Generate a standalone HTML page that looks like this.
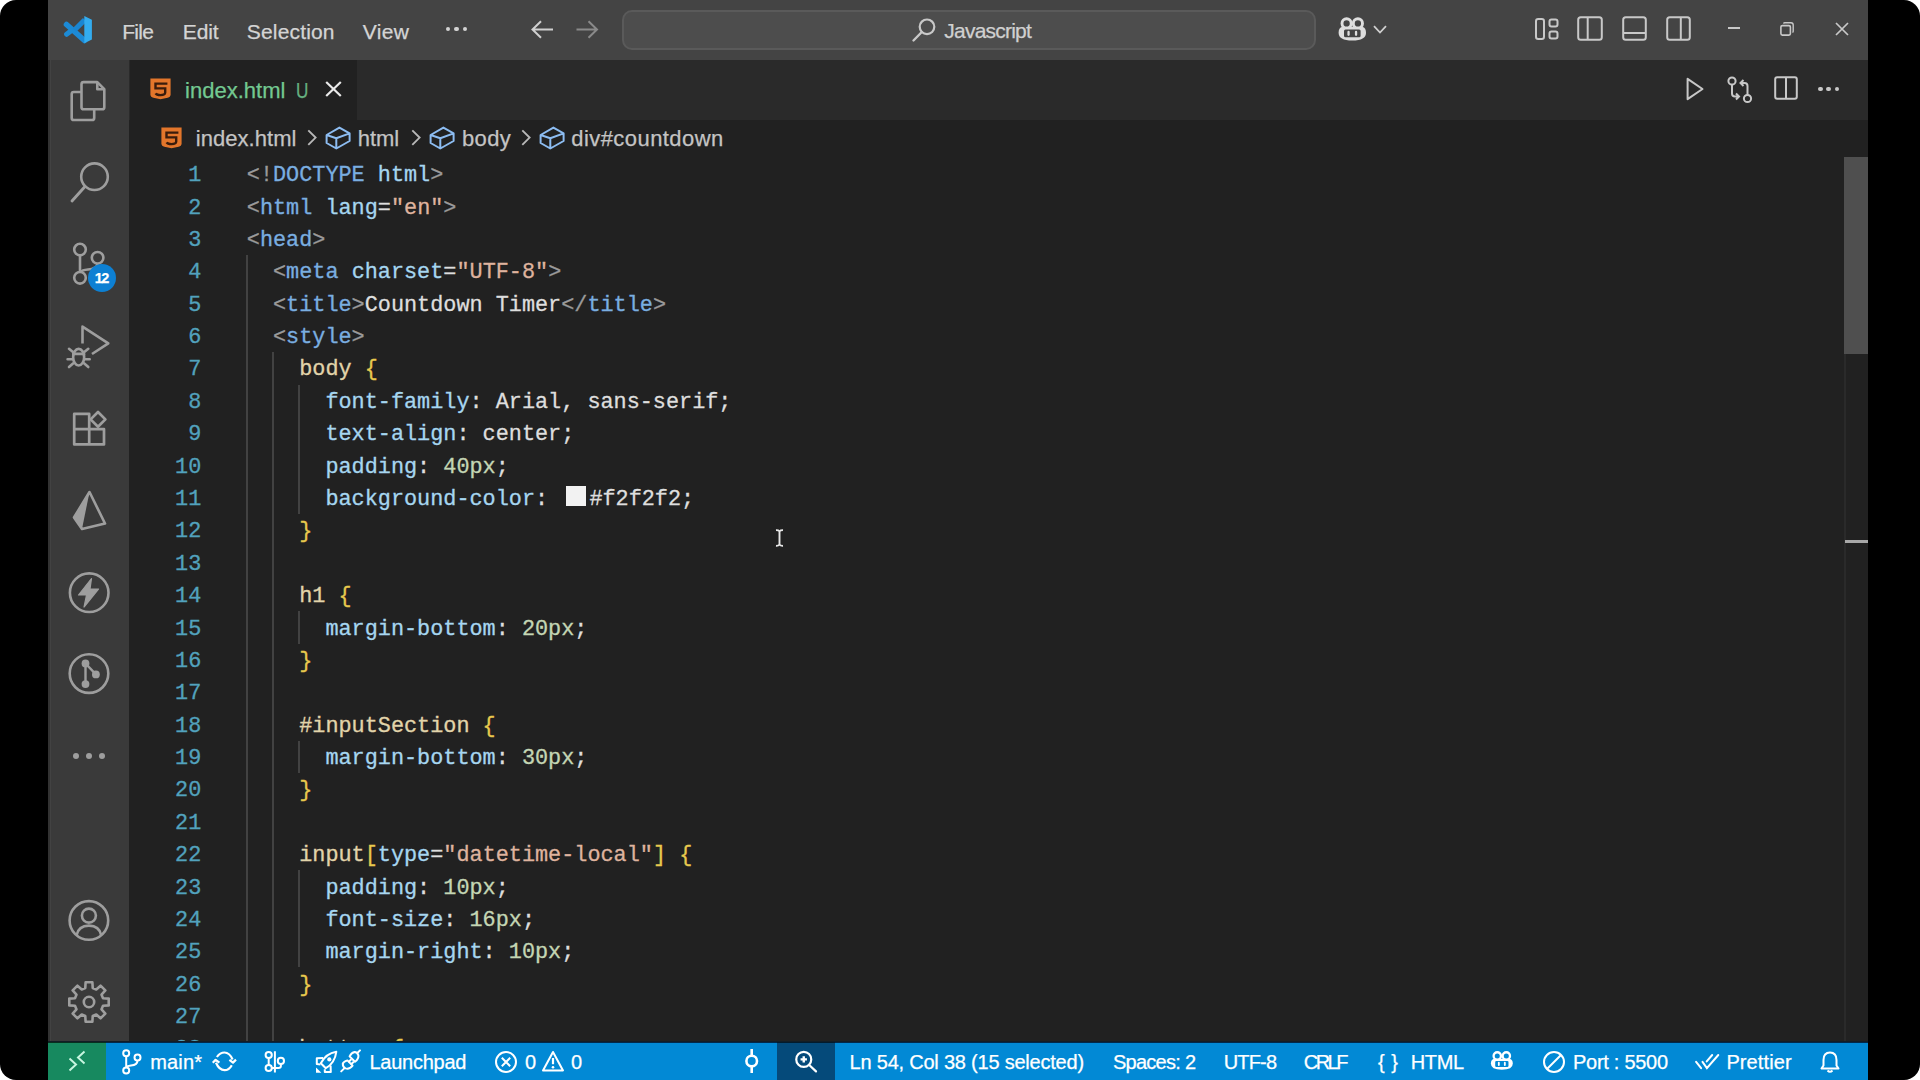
<!DOCTYPE html><html><head><meta charset="utf-8"><title>index.html - VS Code</title><style>
*{margin:0;padding:0;box-sizing:border-box}
html,body{width:1920px;height:1080px;overflow:hidden;background:#fff}
#frame{position:absolute;left:0;top:0;width:1920px;height:1080px;background:#000;border-radius:16px;overflow:hidden}
.r{position:absolute}
.t{position:absolute;white-space:pre}
svg{position:absolute;overflow:visible}
</style></head><body><div id="frame">
<div class="r" style="left:48px;top:0px;width:1820px;height:60px;background:#444444;"></div>
<svg style="left:60px;top:12px;" width="36" height="36" viewBox="0 0 36 36">
<path d="M6.5 12.5 L24.5 28.5" stroke="#1c8ad6" stroke-width="5.6" stroke-linecap="round"/>
<path d="M14.5 18 L24.8 7.8" stroke="#1a86d2" stroke-width="5.2"/>
<path d="M6.6 22.3 L10.5 19.3" stroke="#1d8bd5" stroke-width="5" stroke-linecap="round"/>
<path d="M24.3 4.1 L31.9 7.8 L31.9 27.6 L24.3 31.3 Z" fill="#33acef"/>
</svg>
<div class="t" style="left:122.20px;top:19.02px;font-size:21px;line-height:26px;color:#d4d4d4;font-family:'Liberation Sans',sans-serif;letter-spacing:-0.733px;-webkit-text-stroke:0.25px #d4d4d4;">File</div>
<div class="t" style="left:182.70px;top:19.02px;font-size:21px;line-height:26px;color:#d4d4d4;font-family:'Liberation Sans',sans-serif;letter-spacing:-0.067px;-webkit-text-stroke:0.25px #d4d4d4;">Edit</div>
<div class="t" style="left:246.80px;top:19.02px;font-size:21px;line-height:26px;color:#d4d4d4;font-family:'Liberation Sans',sans-serif;letter-spacing:0.162px;-webkit-text-stroke:0.25px #d4d4d4;">Selection</div>
<div class="t" style="left:362.80px;top:19.02px;font-size:21px;line-height:26px;color:#d4d4d4;font-family:'Liberation Sans',sans-serif;letter-spacing:0.300px;-webkit-text-stroke:0.25px #d4d4d4;">View</div>
<div class="r" style="left:446.0px;top:27px;width:4.4px;height:4.4px;border-radius:50%;background:#d4d4d4"></div>
<div class="r" style="left:454.3px;top:27px;width:4.4px;height:4.4px;border-radius:50%;background:#d4d4d4"></div>
<div class="r" style="left:462.6px;top:27px;width:4.4px;height:4.4px;border-radius:50%;background:#d4d4d4"></div>
<svg style="left:531px;top:20px;" width="23" height="19" viewBox="0 0 23 19"><path d="M1.5 9.5 H22 M10 1.2 L1.5 9.5 L10 17.8" fill="none" stroke="#d0d0d0" stroke-width="2"/></svg>
<svg style="left:576px;top:20px;" width="22" height="19" viewBox="0 0 22 19"><path d="M0.5 9.5 H21 M12.5 1.2 L21 9.5 L12.5 17.8" fill="none" stroke="#8a8a8a" stroke-width="2"/></svg>
<div class="r" style="left:622px;top:10px;width:694px;height:40px;background:#4d4d4d;border:2px solid #5a5a5a;border-radius:10px"></div>
<svg style="left:912px;top:18px;" width="24" height="24" viewBox="0 0 24 24"><circle cx="15" cy="8.8" r="7.3" fill="none" stroke="#c8c8c8" stroke-width="2.2"/><path d="M9.8 14 L1.5 22.5" stroke="#c8c8c8" stroke-width="2.4" stroke-linecap="round"/></svg>
<div class="t" style="left:944.30px;top:17.52px;font-size:21px;line-height:26px;color:#d0d0d0;font-family:'Liberation Sans',sans-serif;letter-spacing:-0.778px;-webkit-text-stroke:0.25px #d0d0d0;">Javascript</div>
<svg style="left:1338px;top:16px;" width="29" height="25" viewBox="0 0 29 25"><path d="M4.2 10.8 Q0.6 12 0.6 16.8 Q0.6 24.6 14.3 24.6 Q28 24.6 28 16.8 Q28 12 24.4 10.8 Z" fill="#dedede"/>
<circle cx="8.6" cy="7.4" r="4.6" fill="#444444" stroke="#dedede" stroke-width="2.9"/><circle cx="19.9" cy="7.4" r="4.6" fill="#444444" stroke="#dedede" stroke-width="2.9"/>
<rect x="6" y="13.6" width="16.6" height="7.6" rx="1.5" fill="#444444"/>
<rect x="9.4" y="14.8" width="2.3" height="5.2" rx="1.15" fill="#dedede"/><rect x="16.9" y="14.8" width="2.3" height="5.2" rx="1.15" fill="#dedede"/></svg>
<svg style="left:1373px;top:25px;" width="14" height="9" viewBox="0 0 14 9"><path d="M1 1.2 L7 7.5 L13 1.2" fill="none" stroke="#cfcfcf" stroke-width="1.8"/></svg>
<svg style="left:1535px;top:18px;" width="24" height="22" viewBox="0 0 24 22"><rect x="1" y="1" width="8" height="20" rx="2.2" fill="none" stroke="#c8c8c8" stroke-width="2"/><rect x="14.5" y="1.5" width="8" height="7" rx="2" fill="none" stroke="#c8c8c8" stroke-width="2"/><rect x="14.5" y="13.5" width="8" height="7" rx="2" fill="none" stroke="#c8c8c8" stroke-width="2"/></svg>
<svg style="left:1577px;top:16px;" width="26" height="25" viewBox="0 0 26 25"><rect x="1.2" y="1.2" width="23.6" height="22.6" rx="2.5" fill="none" stroke="#c8c8c8" stroke-width="2"/><path d="M10.7 1.2 V23.8" stroke="#c8c8c8" stroke-width="2"/></svg>
<svg style="left:1622px;top:16px;" width="25" height="25" viewBox="0 0 25 25"><rect x="1.2" y="1.2" width="22.6" height="22.6" rx="2.5" fill="none" stroke="#c8c8c8" stroke-width="2"/><path d="M1.2 17 H23.8" stroke="#c8c8c8" stroke-width="2"/></svg>
<svg style="left:1666px;top:16px;" width="25" height="25" viewBox="0 0 25 25"><rect x="1.2" y="1.2" width="22.6" height="22.6" rx="2.5" fill="none" stroke="#c8c8c8" stroke-width="2"/><path d="M14.8 1.2 V23.8" stroke="#c8c8c8" stroke-width="2"/></svg>
<div class="r" style="left:1727.5px;top:26.8px;width:12.5px;height:2px;background:#c8c8c8;"></div>
<svg style="left:1780px;top:22px;" width="14" height="14" viewBox="0 0 14 14"><rect x="0.9" y="3.6" width="9.5" height="9.5" rx="1.5" fill="none" stroke="#c8c8c8" stroke-width="1.6"/><path d="M3.6 1.6 Q3.8 0.8 4.8 0.8 L11 0.8 Q13.2 0.8 13.2 3 L13.2 9.2 Q13.2 10.2 12.4 10.4" fill="none" stroke="#c8c8c8" stroke-width="1.4"/></svg>
<svg style="left:1835px;top:22px;" width="14" height="14" viewBox="0 0 14 14"><path d="M1 1 L13 13 M13 1 L1 13" stroke="#c8c8c8" stroke-width="1.7"/></svg>
<div class="r" style="left:48px;top:60px;width:81px;height:982px;background:#3a3a3a;"></div>
<div class="r" style="left:48px;top:60px;width:1.5px;height:982px;background:#323232;"></div>
<div class="r" style="left:49.5px;top:60px;width:1.8px;height:982px;background:#424242;"></div>
<svg style="left:70px;top:80px;" width="36" height="42" viewBox="0 0 36 42"><path d="M11.5 12 H3.8 Q1.7 12 1.7 14.1 V37.9 Q1.7 40 3.8 40 H22.1 Q24.2 40 24.2 37.9 V29.3" fill="none" stroke="#9e9e9e" stroke-width="2.6"/>
<path d="M13.6 2.1 H27.3 L34.3 9.2 V27.2 Q34.3 29.3 32.2 29.3 H13.6 Q11.5 29.3 11.5 27.2 V4.2 Q11.5 2.1 13.6 2.1 Z" fill="none" stroke="#9e9e9e" stroke-width="2.6" stroke-linejoin="round"/>
<path d="M27.3 2.1 V9.2 H34.3" fill="none" stroke="#9e9e9e" stroke-width="2.6" stroke-linejoin="round"/></svg>
<svg style="left:70px;top:160px;" width="40" height="44" viewBox="0 0 40 44"><circle cx="24.5" cy="16.7" r="13.3" fill="none" stroke="#9e9e9e" stroke-width="2.6"/><path d="M15 26.5 L2 41" stroke="#9e9e9e" stroke-width="2.9" stroke-linecap="round"/></svg>
<svg style="left:70px;top:240px;" width="36" height="48" viewBox="0 0 36 48"><circle cx="10" cy="9.6" r="5.8" fill="none" stroke="#9e9e9e" stroke-width="2.6"/>
<circle cx="27.6" cy="17.8" r="5.8" fill="none" stroke="#9e9e9e" stroke-width="2.6"/>
<circle cx="10" cy="37.8" r="5.8" fill="none" stroke="#9e9e9e" stroke-width="2.6"/>
<path d="M10 15.4 V32" stroke="#9e9e9e" stroke-width="2.6"/>
<path d="M27.6 23.6 Q27 29 18 29.5 Q12 30 10.5 32" fill="none" stroke="#9e9e9e" stroke-width="2.6"/></svg>
<div class="r" style="left:88px;top:264px;width:28px;height:28px;border-radius:50%;background:#0d80d3"></div>
<div class="t" style="left:94.70px;top:269.28px;font-size:14.5px;line-height:18px;color:#ffffff;font-family:'Liberation Sans',sans-serif;font-weight:700;letter-spacing:-1.600px;-webkit-text-stroke:0.25px #ffffff;">12</div>
<svg style="left:66px;top:322px;" width="46" height="50" viewBox="0 0 46 50"><path d="M16.5 21.5 V4.6 L42.3 21.3 L26 32" fill="none" stroke="#9e9e9e" stroke-width="2.6" stroke-linejoin="round"/>
<ellipse cx="12.65" cy="35.2" rx="5.5" ry="8.3" fill="none" stroke="#9e9e9e" stroke-width="2.6"/>
<path d="M7.2 31.9 H18.1 M7 30 L3 26.8 M18.3 30 L22.3 26.8 M6.6 37.2 L1.6 37.2 M18.7 37.2 L23.7 37.2 M7 41.5 L3 45 M18.3 41.5 L22.3 45" stroke="#9e9e9e" stroke-width="2.6" stroke-linecap="round"/></svg>
<svg style="left:72px;top:404px;" width="38" height="44" viewBox="0 0 38 44"><path d="M2.2 9.9 H17.2 V40.4 H2.2 Z M2.2 25.2 H32 V40.4 H17.2" fill="none" stroke="#9e9e9e" stroke-width="2.7" stroke-linejoin="round"/>
<path d="M26 8 L33.4 15.4 L26 22.8 L18.6 15.4 Z" fill="none" stroke="#9e9e9e" stroke-width="2.7" stroke-linejoin="round"/></svg>
<svg style="left:71px;top:488.5px;" width="37" height="42" viewBox="0 0 37 42"><path d="M18.5 3 L34 34.5 L11 40 L3 28.5 Z" fill="none" stroke="#9e9e9e" stroke-width="2.6" stroke-linejoin="round"/>
<path d="M18.5 3 L11 40 L3 28.5 Z" fill="#9e9e9e"/></svg>
<svg style="left:67px;top:571px;" width="44" height="44" viewBox="0 0 44 44"><circle cx="22.2" cy="21.7" r="19.3" fill="none" stroke="#9e9e9e" stroke-width="2.6"/>
<path d="M24.5 7.5 L11.5 24 L19.5 24 L17 36 L31.5 18 L23 18 Z" fill="#9e9e9e" stroke="#9e9e9e" stroke-width="1.2" stroke-linejoin="round"/></svg>
<svg style="left:67px;top:652px;" width="44" height="44" viewBox="0 0 44 44"><circle cx="22" cy="21.6" r="19.3" fill="none" stroke="#9e9e9e" stroke-width="2.6"/>
<circle cx="18.5" cy="11.5" r="3.9" fill="#9e9e9e"/><circle cx="28.9" cy="22.4" r="3.9" fill="#9e9e9e"/><circle cx="18.5" cy="32.1" r="3.9" fill="#9e9e9e"/>
<path d="M18.5 11.5 V32.1 M18.5 11.5 L28.9 22.4" stroke="#9e9e9e" stroke-width="2.4"/></svg>
<div class="r" style="left:72.9px;top:753.3px;width:6px;height:6px;border-radius:50%;background:#9e9e9e"></div>
<div class="r" style="left:85.7px;top:753.3px;width:6px;height:6px;border-radius:50%;background:#9e9e9e"></div>
<div class="r" style="left:98.5px;top:753.3px;width:6px;height:6px;border-radius:50%;background:#9e9e9e"></div>
<svg style="left:67px;top:898px;" width="44" height="44" viewBox="0 0 44 44"><circle cx="21.9" cy="22.4" r="19.3" fill="none" stroke="#9e9e9e" stroke-width="2.6"/>
<circle cx="21.9" cy="17.6" r="7" fill="none" stroke="#9e9e9e" stroke-width="2.6"/>
<path d="M9.6 37.2 Q11.5 27.6 21.9 27.6 Q32.3 27.6 34.2 37.2" fill="none" stroke="#9e9e9e" stroke-width="2.6"/></svg>
<svg style="left:67px;top:980px;" width="44" height="44" viewBox="0 0 44 44"><path d="M18.27 7.99 L18.62 2.29 L25.38 2.29 L25.73 7.99 L29.27 9.46 L33.55 5.67 L38.33 10.45 L34.54 14.73 L36.01 18.27 L41.71 18.62 L41.71 25.38 L36.01 25.73 L34.54 29.27 L38.33 33.55 L33.55 38.33 L29.27 34.54 L25.73 36.01 L25.38 41.71 L18.62 41.71 L18.27 36.01 L14.73 34.54 L10.45 38.33 L5.67 33.55 L9.46 29.27 L7.99 25.73 L2.29 25.38 L2.29 18.62 L7.99 18.27 L9.46 14.73 L5.67 10.45 L10.45 5.67 L14.73 9.46 Z" fill="none" stroke="#9e9e9e" stroke-width="2.6" stroke-linejoin="round"/><circle cx="22" cy="22" r="5.2" fill="none" stroke="#9e9e9e" stroke-width="2.6"/></svg>
<div class="r" style="left:129px;top:60px;width:1739px;height:60px;background:#2a2a2a;"></div>
<div class="r" style="left:130px;top:60px;width:227px;height:60px;background:#212121;"></div>
<div class="r" style="left:129px;top:120px;width:1739px;height:922px;background:#212121;"></div>
<svg style="left:150px;top:78.3px;" width="21" height="21.5" viewBox="0 0 21 21.5"><path d="M0.4 0.4 H20.6 V16.2 Q20.6 19 17.6 19.8 L10.5 21.3 L3.4 19.8 Q0.4 19 0.4 16.2 Z" fill="#e3762b"/>
<path d="M17.4 5.6 H5.5 V10.4 H15.2 V14.5 Q15.1 17.1 10.5 17.1 Q6.6 17.1 5.6 15.4" fill="none" stroke="#3a1c0c" stroke-width="2.4"/></svg>
<div class="t" style="left:185.00px;top:77.08px;font-size:22px;line-height:28px;color:#73c991;font-family:'Liberation Sans',sans-serif;letter-spacing:0.022px;-webkit-text-stroke:0.25px #73c991;">index.html</div>
<div class="t" style="left:295.60px;top:77.08px;font-size:22px;line-height:28px;color:#73c991;font-family:'Liberation Sans',sans-serif;transform:scaleX(0.780);transform-origin:0 0;-webkit-text-stroke:0.25px #73c991;opacity:0.85">U</div>
<svg style="left:325px;top:81px;" width="17" height="16" viewBox="0 0 17 16"><path d="M1.2 1 L15.8 15 M15.8 1 L1.2 15" stroke="#eaeaea" stroke-width="2.2"/></svg>
<svg style="left:1686px;top:77px;" width="18" height="24" viewBox="0 0 18 24"><path d="M1.6 1.8 L16.5 12 L1.6 22.2 Z" fill="none" stroke="#c8c8c8" stroke-width="2" stroke-linejoin="round"/></svg>
<svg style="left:1727px;top:76px;" width="26" height="28" viewBox="0 0 26 28"><circle cx="5" cy="5" r="3.6" fill="none" stroke="#c8c8c8" stroke-width="2"/><circle cx="20.5" cy="22.5" r="3.6" fill="none" stroke="#c8c8c8" stroke-width="2"/>
<path d="M5 8.6 V17.5 Q5 20.5 8 20.5 H11 M9 17.5 L12 20.5 L9 23.5" fill="none" stroke="#c8c8c8" stroke-width="2"/>
<path d="M20.5 18.9 V10 Q20.5 7 17.5 7 H14.5 M16.5 4 L13.5 7 L16.5 10" fill="none" stroke="#c8c8c8" stroke-width="2"/></svg>
<svg style="left:1774px;top:76px;" width="24" height="24" viewBox="0 0 24 24"><rect x="1.2" y="1.2" width="21.6" height="21.6" rx="2" fill="none" stroke="#c8c8c8" stroke-width="2"/><path d="M12 1.2 V22.8" stroke="#c8c8c8" stroke-width="2"/></svg>
<div class="r" style="left:1818.0px;top:86.5px;width:4.6px;height:4.6px;border-radius:50%;background:#c8c8c8"></div>
<div class="r" style="left:1826.3px;top:86.5px;width:4.6px;height:4.6px;border-radius:50%;background:#c8c8c8"></div>
<div class="r" style="left:1834.6px;top:86.5px;width:4.6px;height:4.6px;border-radius:50%;background:#c8c8c8"></div>
<svg style="left:160.5px;top:126.6px;" width="21" height="21.5" viewBox="0 0 21 21.5"><path d="M0.4 0.4 H20.6 V16.2 Q20.6 19 17.6 19.8 L10.5 21.3 L3.4 19.8 Q0.4 19 0.4 16.2 Z" fill="#e3762b"/>
<path d="M17.4 5.6 H5.5 V10.4 H15.2 V14.5 Q15.1 17.1 10.5 17.1 Q6.6 17.1 5.6 15.4" fill="none" stroke="#3a1c0c" stroke-width="2.4"/></svg>
<div class="t" style="left:195.80px;top:125.28px;font-size:22px;line-height:28px;color:#c4c4c4;font-family:'Liberation Sans',sans-serif;letter-spacing:0.044px;-webkit-text-stroke:0.25px #c4c4c4;">index.html</div>
<svg style="left:306.5px;top:128.5px;" width="11" height="18" viewBox="0 0 11 18"><path d="M1.3 1.3 L8.6 8.6 L1.3 15.9" fill="none" stroke="#b8b8b8" stroke-width="1.9"/></svg>
<svg style="left:325px;top:126px;" width="27" height="24" viewBox="0 0 27 24"><path d="M1.6 9 L14.4 1.6 L24.6 7.4 L11.3 12.2 Z M1.6 9 V17 L11.3 22.5 L24.6 15 V7.4 M11.3 12.2 V22.5" fill="none" stroke="#8dbdf2" stroke-width="2" stroke-linejoin="round"/></svg>
<div class="t" style="left:357.70px;top:125.28px;font-size:22px;line-height:28px;color:#c4c4c4;font-family:'Liberation Sans',sans-serif;-webkit-text-stroke:0.25px #c4c4c4;">html</div>
<svg style="left:410.8px;top:128.5px;" width="11" height="18" viewBox="0 0 11 18"><path d="M1.3 1.3 L8.6 8.6 L1.3 15.9" fill="none" stroke="#b8b8b8" stroke-width="1.9"/></svg>
<svg style="left:429.3px;top:126px;" width="27" height="24" viewBox="0 0 27 24"><path d="M1.6 9 L14.4 1.6 L24.6 7.4 L11.3 12.2 Z M1.6 9 V17 L11.3 22.5 L24.6 15 V7.4 M11.3 12.2 V22.5" fill="none" stroke="#8dbdf2" stroke-width="2" stroke-linejoin="round"/></svg>
<div class="t" style="left:461.90px;top:125.28px;font-size:22px;line-height:28px;color:#c4c4c4;font-family:'Liberation Sans',sans-serif;letter-spacing:0.400px;-webkit-text-stroke:0.25px #c4c4c4;">body</div>
<svg style="left:521.2px;top:128.5px;" width="11" height="18" viewBox="0 0 11 18"><path d="M1.3 1.3 L8.6 8.6 L1.3 15.9" fill="none" stroke="#b8b8b8" stroke-width="1.9"/></svg>
<svg style="left:538.8px;top:126px;" width="27" height="24" viewBox="0 0 27 24"><path d="M1.6 9 L14.4 1.6 L24.6 7.4 L11.3 12.2 Z M1.6 9 V17 L11.3 22.5 L24.6 15 V7.4 M11.3 12.2 V22.5" fill="none" stroke="#8dbdf2" stroke-width="2" stroke-linejoin="round"/></svg>
<div class="t" style="left:571.25px;top:125.28px;font-size:22px;line-height:28px;color:#c4c4c4;font-family:'Liberation Sans',sans-serif;letter-spacing:0.437px;-webkit-text-stroke:0.25px #c4c4c4;">div#countdown</div>
<div class="r" style="left:245.9px;top:255.1px;width:2px;height:809.5px;background:#424242;"></div>
<div class="r" style="left:272.1px;top:352.3px;width:2px;height:712.4px;background:#424242;"></div>
<div class="r" style="left:298.3px;top:384.7px;width:2px;height:129.5px;background:#424242;"></div>
<div class="r" style="left:298.3px;top:611.3px;width:2px;height:32.4px;background:#424242;"></div>
<div class="r" style="left:298.3px;top:740.8px;width:2px;height:32.4px;background:#424242;"></div>
<div class="r" style="left:298.3px;top:870.4px;width:2px;height:97.1px;background:#424242;"></div>
<div class="r" style="left:0;top:120px;width:1868px;height:922px;overflow:hidden">
<div class="t" style="left:188.20px;top:40.20px;font:21.83px/32.38px 'Liberation Mono',monospace;color:#52a2bd;-webkit-text-stroke:0.3px #52a2bd">1</div>
<div class="t" style="left:246.8px;top:40.20px;font:21.83px/32.38px 'Liberation Mono',monospace;-webkit-text-stroke-width:0.3px"><span style="color:#9a9a9a">&lt;!</span><span style="color:#7aaee0">DOCTYPE</span><span style="color:#dedede"> </span><span style="color:#a6d6f0">html</span><span style="color:#9a9a9a">&gt;</span></div>
<div class="t" style="left:188.20px;top:72.58px;font:21.83px/32.38px 'Liberation Mono',monospace;color:#52a2bd;-webkit-text-stroke:0.3px #52a2bd">2</div>
<div class="t" style="left:246.8px;top:72.58px;font:21.83px/32.38px 'Liberation Mono',monospace;-webkit-text-stroke-width:0.3px"><span style="color:#9a9a9a">&lt;</span><span style="color:#7aaee0">html</span><span style="color:#dedede"> </span><span style="color:#a6d6f0">lang</span><span style="color:#dedede">=</span><span style="color:#dfb39e">&quot;en&quot;</span><span style="color:#9a9a9a">&gt;</span></div>
<div class="t" style="left:188.20px;top:104.96px;font:21.83px/32.38px 'Liberation Mono',monospace;color:#52a2bd;-webkit-text-stroke:0.3px #52a2bd">3</div>
<div class="t" style="left:246.8px;top:104.96px;font:21.83px/32.38px 'Liberation Mono',monospace;-webkit-text-stroke-width:0.3px"><span style="color:#9a9a9a">&lt;</span><span style="color:#7aaee0">head</span><span style="color:#9a9a9a">&gt;</span></div>
<div class="t" style="left:188.20px;top:137.34px;font:21.83px/32.38px 'Liberation Mono',monospace;color:#52a2bd;-webkit-text-stroke:0.3px #52a2bd">4</div>
<div class="t" style="left:246.8px;top:137.34px;font:21.83px/32.38px 'Liberation Mono',monospace;-webkit-text-stroke-width:0.3px"><span style="color:#9a9a9a">  &lt;</span><span style="color:#7aaee0">meta</span><span style="color:#dedede"> </span><span style="color:#a6d6f0">charset</span><span style="color:#dedede">=</span><span style="color:#dfb39e">&quot;UTF-8&quot;</span><span style="color:#9a9a9a">&gt;</span></div>
<div class="t" style="left:188.20px;top:169.72px;font:21.83px/32.38px 'Liberation Mono',monospace;color:#52a2bd;-webkit-text-stroke:0.3px #52a2bd">5</div>
<div class="t" style="left:246.8px;top:169.72px;font:21.83px/32.38px 'Liberation Mono',monospace;-webkit-text-stroke-width:0.3px"><span style="color:#9a9a9a">  &lt;</span><span style="color:#7aaee0">title</span><span style="color:#9a9a9a">&gt;</span><span style="color:#dedede">Countdown Timer</span><span style="color:#9a9a9a">&lt;/</span><span style="color:#7aaee0">title</span><span style="color:#9a9a9a">&gt;</span></div>
<div class="t" style="left:188.20px;top:202.10px;font:21.83px/32.38px 'Liberation Mono',monospace;color:#52a2bd;-webkit-text-stroke:0.3px #52a2bd">6</div>
<div class="t" style="left:246.8px;top:202.10px;font:21.83px/32.38px 'Liberation Mono',monospace;-webkit-text-stroke-width:0.3px"><span style="color:#9a9a9a">  &lt;</span><span style="color:#7aaee0">style</span><span style="color:#9a9a9a">&gt;</span></div>
<div class="t" style="left:188.20px;top:234.48px;font:21.83px/32.38px 'Liberation Mono',monospace;color:#52a2bd;-webkit-text-stroke:0.3px #52a2bd">7</div>
<div class="t" style="left:246.8px;top:234.48px;font:21.83px/32.38px 'Liberation Mono',monospace;-webkit-text-stroke-width:0.3px"><span style="color:#e2d4aa">    body</span><span style="color:#dedede"> </span><span style="color:#e8c94e">{</span></div>
<div class="t" style="left:188.20px;top:266.86px;font:21.83px/32.38px 'Liberation Mono',monospace;color:#52a2bd;-webkit-text-stroke:0.3px #52a2bd">8</div>
<div class="t" style="left:246.8px;top:266.86px;font:21.83px/32.38px 'Liberation Mono',monospace;-webkit-text-stroke-width:0.3px"><span style="color:#a6d6f0">      font-family</span><span style="color:#dedede">: Arial, sans-serif;</span></div>
<div class="t" style="left:188.20px;top:299.24px;font:21.83px/32.38px 'Liberation Mono',monospace;color:#52a2bd;-webkit-text-stroke:0.3px #52a2bd">9</div>
<div class="t" style="left:246.8px;top:299.24px;font:21.83px/32.38px 'Liberation Mono',monospace;-webkit-text-stroke-width:0.3px"><span style="color:#a6d6f0">      text-align</span><span style="color:#dedede">: center;</span></div>
<div class="t" style="left:175.10px;top:331.62px;font:21.83px/32.38px 'Liberation Mono',monospace;color:#52a2bd;-webkit-text-stroke:0.3px #52a2bd">10</div>
<div class="t" style="left:246.8px;top:331.62px;font:21.83px/32.38px 'Liberation Mono',monospace;-webkit-text-stroke-width:0.3px"><span style="color:#a6d6f0">      padding</span><span style="color:#dedede">: </span><span style="color:#c4d6b4">40px</span><span style="color:#dedede">;</span></div>
<div class="t" style="left:175.10px;top:364.00px;font:21.83px/32.38px 'Liberation Mono',monospace;color:#52a2bd;-webkit-text-stroke:0.3px #52a2bd">11</div>
<div class="t" style="left:246.8px;top:364.00px;font:21.83px/32.38px 'Liberation Mono',monospace;-webkit-text-stroke-width:0.3px"><span style="color:#a6d6f0">      background-color</span><span style="color:#dedede">: </span><span style="display:inline-block;width:28.2px;height:10px;position:relative"><span style="position:absolute;left:5.05px;top:-8.75px;width:19.5px;height:19.5px;background:#f2f2f2"></span></span><span style="color:#dedede">#f2f2f2;</span></div>
<div class="t" style="left:175.10px;top:396.38px;font:21.83px/32.38px 'Liberation Mono',monospace;color:#52a2bd;-webkit-text-stroke:0.3px #52a2bd">12</div>
<div class="t" style="left:246.8px;top:396.38px;font:21.83px/32.38px 'Liberation Mono',monospace;-webkit-text-stroke-width:0.3px"><span style="color:#e8c94e">    }</span></div>
<div class="t" style="left:175.10px;top:428.76px;font:21.83px/32.38px 'Liberation Mono',monospace;color:#52a2bd;-webkit-text-stroke:0.3px #52a2bd">13</div>
<div class="t" style="left:246.8px;top:428.76px;font:21.83px/32.38px 'Liberation Mono',monospace;-webkit-text-stroke-width:0.3px"></div>
<div class="t" style="left:175.10px;top:461.14px;font:21.83px/32.38px 'Liberation Mono',monospace;color:#52a2bd;-webkit-text-stroke:0.3px #52a2bd">14</div>
<div class="t" style="left:246.8px;top:461.14px;font:21.83px/32.38px 'Liberation Mono',monospace;-webkit-text-stroke-width:0.3px"><span style="color:#e2d4aa">    h1</span><span style="color:#dedede"> </span><span style="color:#e8c94e">{</span></div>
<div class="t" style="left:175.10px;top:493.52px;font:21.83px/32.38px 'Liberation Mono',monospace;color:#52a2bd;-webkit-text-stroke:0.3px #52a2bd">15</div>
<div class="t" style="left:246.8px;top:493.52px;font:21.83px/32.38px 'Liberation Mono',monospace;-webkit-text-stroke-width:0.3px"><span style="color:#a6d6f0">      margin-bottom</span><span style="color:#dedede">: </span><span style="color:#c4d6b4">20px</span><span style="color:#dedede">;</span></div>
<div class="t" style="left:175.10px;top:525.90px;font:21.83px/32.38px 'Liberation Mono',monospace;color:#52a2bd;-webkit-text-stroke:0.3px #52a2bd">16</div>
<div class="t" style="left:246.8px;top:525.90px;font:21.83px/32.38px 'Liberation Mono',monospace;-webkit-text-stroke-width:0.3px"><span style="color:#e8c94e">    }</span></div>
<div class="t" style="left:175.10px;top:558.28px;font:21.83px/32.38px 'Liberation Mono',monospace;color:#52a2bd;-webkit-text-stroke:0.3px #52a2bd">17</div>
<div class="t" style="left:246.8px;top:558.28px;font:21.83px/32.38px 'Liberation Mono',monospace;-webkit-text-stroke-width:0.3px"></div>
<div class="t" style="left:175.10px;top:590.66px;font:21.83px/32.38px 'Liberation Mono',monospace;color:#52a2bd;-webkit-text-stroke:0.3px #52a2bd">18</div>
<div class="t" style="left:246.8px;top:590.66px;font:21.83px/32.38px 'Liberation Mono',monospace;-webkit-text-stroke-width:0.3px"><span style="color:#e2d4aa">    #inputSection</span><span style="color:#dedede"> </span><span style="color:#e8c94e">{</span></div>
<div class="t" style="left:175.10px;top:623.04px;font:21.83px/32.38px 'Liberation Mono',monospace;color:#52a2bd;-webkit-text-stroke:0.3px #52a2bd">19</div>
<div class="t" style="left:246.8px;top:623.04px;font:21.83px/32.38px 'Liberation Mono',monospace;-webkit-text-stroke-width:0.3px"><span style="color:#a6d6f0">      margin-bottom</span><span style="color:#dedede">: </span><span style="color:#c4d6b4">30px</span><span style="color:#dedede">;</span></div>
<div class="t" style="left:175.10px;top:655.42px;font:21.83px/32.38px 'Liberation Mono',monospace;color:#52a2bd;-webkit-text-stroke:0.3px #52a2bd">20</div>
<div class="t" style="left:246.8px;top:655.42px;font:21.83px/32.38px 'Liberation Mono',monospace;-webkit-text-stroke-width:0.3px"><span style="color:#e8c94e">    }</span></div>
<div class="t" style="left:175.10px;top:687.80px;font:21.83px/32.38px 'Liberation Mono',monospace;color:#52a2bd;-webkit-text-stroke:0.3px #52a2bd">21</div>
<div class="t" style="left:246.8px;top:687.80px;font:21.83px/32.38px 'Liberation Mono',monospace;-webkit-text-stroke-width:0.3px"></div>
<div class="t" style="left:175.10px;top:720.18px;font:21.83px/32.38px 'Liberation Mono',monospace;color:#52a2bd;-webkit-text-stroke:0.3px #52a2bd">22</div>
<div class="t" style="left:246.8px;top:720.18px;font:21.83px/32.38px 'Liberation Mono',monospace;-webkit-text-stroke-width:0.3px"><span style="color:#e2d4aa">    input</span><span style="color:#e8c94e">[</span><span style="color:#a6d6f0">type</span><span style="color:#dedede">=</span><span style="color:#dfb39e">&quot;datetime-local&quot;</span><span style="color:#e8c94e">]</span><span style="color:#dedede"> </span><span style="color:#e8c94e">{</span></div>
<div class="t" style="left:175.10px;top:752.56px;font:21.83px/32.38px 'Liberation Mono',monospace;color:#52a2bd;-webkit-text-stroke:0.3px #52a2bd">23</div>
<div class="t" style="left:246.8px;top:752.56px;font:21.83px/32.38px 'Liberation Mono',monospace;-webkit-text-stroke-width:0.3px"><span style="color:#a6d6f0">      padding</span><span style="color:#dedede">: </span><span style="color:#c4d6b4">10px</span><span style="color:#dedede">;</span></div>
<div class="t" style="left:175.10px;top:784.94px;font:21.83px/32.38px 'Liberation Mono',monospace;color:#52a2bd;-webkit-text-stroke:0.3px #52a2bd">24</div>
<div class="t" style="left:246.8px;top:784.94px;font:21.83px/32.38px 'Liberation Mono',monospace;-webkit-text-stroke-width:0.3px"><span style="color:#a6d6f0">      font-size</span><span style="color:#dedede">: </span><span style="color:#c4d6b4">16px</span><span style="color:#dedede">;</span></div>
<div class="t" style="left:175.10px;top:817.32px;font:21.83px/32.38px 'Liberation Mono',monospace;color:#52a2bd;-webkit-text-stroke:0.3px #52a2bd">25</div>
<div class="t" style="left:246.8px;top:817.32px;font:21.83px/32.38px 'Liberation Mono',monospace;-webkit-text-stroke-width:0.3px"><span style="color:#a6d6f0">      margin-right</span><span style="color:#dedede">: </span><span style="color:#c4d6b4">10px</span><span style="color:#dedede">;</span></div>
<div class="t" style="left:175.10px;top:849.70px;font:21.83px/32.38px 'Liberation Mono',monospace;color:#52a2bd;-webkit-text-stroke:0.3px #52a2bd">26</div>
<div class="t" style="left:246.8px;top:849.70px;font:21.83px/32.38px 'Liberation Mono',monospace;-webkit-text-stroke-width:0.3px"><span style="color:#e8c94e">    }</span></div>
<div class="t" style="left:175.10px;top:882.08px;font:21.83px/32.38px 'Liberation Mono',monospace;color:#52a2bd;-webkit-text-stroke:0.3px #52a2bd">27</div>
<div class="t" style="left:246.8px;top:882.08px;font:21.83px/32.38px 'Liberation Mono',monospace;-webkit-text-stroke-width:0.3px"></div>
<div class="t" style="left:175.10px;top:914.46px;font:21.83px/32.38px 'Liberation Mono',monospace;color:#52a2bd;-webkit-text-stroke:0.3px #52a2bd">28</div>
<div class="t" style="left:246.8px;top:914.46px;font:21.83px/32.38px 'Liberation Mono',monospace;-webkit-text-stroke-width:0.3px"><span style="color:#e2d4aa">    button</span><span style="color:#dedede"> </span><span style="color:#e8c94e">{</span></div>
</div>
<div class="r" style="left:1844px;top:354px;width:1.6px;height:688px;background:#2a2a2a;"></div>
<div class="r" style="left:1844px;top:157px;width:24px;height:197px;background:#4f4f4f;"></div>
<div class="r" style="left:1845px;top:539.5px;width:23px;height:3px;background:#a8a8a8;"></div>
<svg style="left:775px;top:529px;" width="9" height="18" viewBox="0 0 9 18"><path d="M1 1.2 Q3.2 1 4.5 2.3 Q5.8 1 8 1.2 M4.5 2.3 V15.7 M1 16.8 Q3.2 17 4.5 15.7 Q5.8 17 8 16.8" fill="none" stroke="#e8e8e8" stroke-width="1.9"/></svg>
<div class="r" style="left:48px;top:1041px;width:1820px;height:1px;background:#121d26;"></div>
<div class="r" style="left:48px;top:1042px;width:1820px;height:1px;background:#03284a;"></div>
<div class="r" style="left:48px;top:1043px;width:1820px;height:37px;background:#0289d5;"></div>
<div class="r" style="left:48px;top:1043px;width:58px;height:37px;background:#17895f;"></div>
<div class="r" style="left:48px;top:1042px;width:58px;height:1px;background:#07301f;"></div>
<div class="r" style="left:777px;top:1043px;width:58px;height:37px;background:#054a7a;"></div>
<div class="r" style="left:777px;top:1042px;width:58px;height:1px;background:#031b2d;"></div>
<svg style="left:68px;top:1050px;" width="18" height="22" viewBox="0 0 18 22"><path d="M1.5 8.5 L8 14.5 L1.5 20.5 M16.5 1.5 L10 7.5 L16.5 13.5" fill="none" stroke="#c6f5df" stroke-width="2"/></svg>
<svg style="left:122px;top:1049px;" width="20" height="26" viewBox="0 0 20 26"><circle cx="4.2" cy="4.2" r="3" fill="none" stroke="#ffffff" stroke-width="2"/><circle cx="4.2" cy="21.5" r="3" fill="none" stroke="#ffffff" stroke-width="2"/><circle cx="15.5" cy="8.5" r="3" fill="none" stroke="#ffffff" stroke-width="2"/>
<path d="M4.2 7.2 V18.5 M15.5 11.5 Q15.5 16 9 16.5 Q4.5 17 4.2 18.5" fill="none" stroke="#ffffff" stroke-width="2"/></svg>
<div class="t" style="left:150.30px;top:1050.17px;font-size:20px;line-height:25px;color:#ffffff;font-family:'Liberation Sans',sans-serif;letter-spacing:0.125px;-webkit-text-stroke:0.25px #ffffff;">main*</div>
<svg style="left:212px;top:1050px;" width="25" height="22" viewBox="0 0 25 22"><path d="M4.9 7 Q8 2.5 12.5 2.5 Q17.5 2.5 20.6 9.5 M19.8 15.2 Q17 20.2 12.5 20.2 Q7.2 20.2 4 12.8" fill="none" stroke="#ffffff" stroke-width="2.2"/>
<path d="M17.4 9.8 L21 12.6 L24 9.6 M0.8 12.8 L3.6 9.8 L7.4 12.6" fill="none" stroke="#ffffff" stroke-width="2.2" stroke-linejoin="round"/></svg>
<svg style="left:264px;top:1049px;" width="22" height="26" viewBox="0 0 22 26"><circle cx="4.7" cy="6" r="3.1" fill="none" stroke="#ffffff" stroke-width="2"/><circle cx="4.7" cy="19" r="3.1" fill="none" stroke="#ffffff" stroke-width="2"/><circle cx="16.9" cy="11.9" r="3.1" fill="none" stroke="#ffffff" stroke-width="2"/>
<path d="M4.7 9.1 V15.9 M10.9 2.2 V23.4 M16.9 15 V17 Q16.9 19 14.5 19 H7.8" fill="none" stroke="#ffffff" stroke-width="2"/></svg>
<svg style="left:315px;top:1050px;" width="24" height="24" viewBox="0 0 24 24"><path d="M21.3 1.8 Q11 3.5 5.8 13.2 L10.8 18.2 Q19.8 13 21.3 1.8 Z" fill="none" stroke="#ffffff" stroke-width="2" stroke-linejoin="round"/>
<circle cx="14.3" cy="9.4" r="2.1" fill="#ffffff"/>
<path d="M8 8 L1.8 8.2 L1.8 14 L5.4 14.4 M15.6 15.6 L15.8 22 L9.8 22 L9.8 19.2" fill="none" stroke="#ffffff" stroke-width="2" stroke-linejoin="round"/>
<path d="M1 17.4 V22.8 H6.4 Z" fill="#ffffff"/></svg>
<svg style="left:340px;top:1049px;" width="22" height="24" viewBox="0 0 22 24"><path d="M7.4 11.4 L12.6 16.6 Q9.5 20.6 5.5 19.4 Q2.6 18 2.8 14.6 Q3.4 12.6 7.4 11.4 Z M9.6 7.4 L15 12.8 Q18.8 9.9 18.4 6.4 Q17.4 3.2 14.6 3 Q11.5 3.6 9.6 7.4 Z" fill="none" stroke="#ffffff" stroke-width="2" stroke-linejoin="round"/>
<path d="M4 19.6 L1.2 22.4 M17.6 3.8 L20 1.4 M9 12.6 L10.8 10.8 M11.4 15 L13.2 13.2" fill="none" stroke="#ffffff" stroke-width="2" stroke-linecap="round"/></svg>
<div class="t" style="left:369.50px;top:1050.17px;font-size:20px;line-height:25px;color:#ffffff;font-family:'Liberation Sans',sans-serif;letter-spacing:-0.263px;-webkit-text-stroke:0.25px #ffffff;">Launchpad</div>
<svg style="left:494px;top:1050px;" width="24" height="24" viewBox="0 0 24 24"><circle cx="12" cy="12" r="10" fill="none" stroke="#ffffff" stroke-width="2"/><path d="M7.8 7.8 L16.2 16.2 M16.2 7.8 L7.8 16.2" stroke="#ffffff" stroke-width="2"/></svg>
<div class="t" style="left:525.00px;top:1050.17px;font-size:20px;line-height:25px;color:#ffffff;font-family:'Liberation Sans',sans-serif;-webkit-text-stroke:0.25px #ffffff;">0</div>
<svg style="left:541px;top:1049px;" width="24" height="24" viewBox="0 0 24 24"><path d="M12 3 L22 21.4 H2 Z" fill="none" stroke="#ffffff" stroke-width="2" stroke-linejoin="round"/><path d="M12 9 V15.2" stroke="#ffffff" stroke-width="2.2"/><circle cx="12" cy="18.2" r="1.3" fill="#ffffff"/></svg>
<div class="t" style="left:571.00px;top:1050.17px;font-size:20px;line-height:25px;color:#ffffff;font-family:'Liberation Sans',sans-serif;-webkit-text-stroke:0.25px #ffffff;">0</div>
<svg style="left:744px;top:1048px;" width="16" height="26" viewBox="0 0 16 26"><circle cx="7.7" cy="13" r="5.3" fill="none" stroke="#ffffff" stroke-width="2.6"/><path d="M7.7 1 V7.7 M7.7 18.3 V25" stroke="#ffffff" stroke-width="2.6"/></svg>
<svg style="left:795px;top:1053px;" width="23" height="20" viewBox="0 0 23 20"><circle cx="8.75" cy="6.4" r="7.5" fill="none" stroke="#ffffff" stroke-width="2.2"/><path d="M8.75 3.2 V9.6 M5.55 6.4 H11.95" stroke="#ffffff" stroke-width="2.4"/><path d="M14.2 12 L21 18.4" stroke="#ffffff" stroke-width="2.2" stroke-linecap="round"/></svg>
<div class="t" style="left:849.60px;top:1050.17px;font-size:20px;line-height:25px;color:#ffffff;font-family:'Liberation Sans',sans-serif;letter-spacing:-0.219px;-webkit-text-stroke:0.25px #ffffff;">Ln 54, Col 38 (15 selected)</div>
<div class="t" style="left:1112.90px;top:1050.17px;font-size:20px;line-height:25px;color:#ffffff;font-family:'Liberation Sans',sans-serif;letter-spacing:-0.725px;-webkit-text-stroke:0.25px #ffffff;">Spaces: 2</div>
<div class="t" style="left:1223.70px;top:1050.17px;font-size:20px;line-height:25px;color:#ffffff;font-family:'Liberation Sans',sans-serif;letter-spacing:-0.825px;-webkit-text-stroke:0.25px #ffffff;">UTF-8</div>
<div class="t" style="left:1303.80px;top:1050.17px;font-size:20px;line-height:25px;color:#ffffff;font-family:'Liberation Sans',sans-serif;letter-spacing:-2.533px;-webkit-text-stroke:0.25px #ffffff;">CRLF</div>
<div class="t" style="left:1378.00px;top:1050.17px;font-size:20px;line-height:25px;color:#ffffff;font-family:'Liberation Sans',sans-serif;letter-spacing:0.450px;-webkit-text-stroke:0.25px #ffffff;">{ }</div>
<div class="t" style="left:1410.70px;top:1050.17px;font-size:20px;line-height:25px;color:#ffffff;font-family:'Liberation Sans',sans-serif;letter-spacing:-0.333px;-webkit-text-stroke:0.25px #ffffff;">HTML</div>
<svg style="left:1489px;top:1050px;" width="26" height="20" viewBox="0 0 29 25"><path d="M4.2 10.8 Q0.6 12 0.6 16.8 Q0.6 24.6 14.3 24.6 Q28 24.6 28 16.8 Q28 12 24.4 10.8 Z" fill="#ffffff"/>
<circle cx="8.6" cy="7.4" r="4.6" fill="#0289d5" stroke="#ffffff" stroke-width="2.9"/><circle cx="19.9" cy="7.4" r="4.6" fill="#0289d5" stroke="#ffffff" stroke-width="2.9"/>
<rect x="6" y="13.6" width="16.6" height="7.6" rx="1.5" fill="#0289d5"/>
<rect x="9.4" y="14.8" width="2.3" height="5.2" rx="1.15" fill="#ffffff"/><rect x="16.9" y="14.8" width="2.3" height="5.2" rx="1.15" fill="#ffffff"/></svg>
<svg style="left:1542px;top:1050px;" width="24" height="24" viewBox="0 0 24 24"><circle cx="12" cy="12" r="10" fill="none" stroke="#ffffff" stroke-width="2"/><path d="M5 19 L19 5" stroke="#ffffff" stroke-width="2"/></svg>
<div class="t" style="left:1573.00px;top:1050.17px;font-size:20px;line-height:25px;color:#ffffff;font-family:'Liberation Sans',sans-serif;letter-spacing:-0.280px;-webkit-text-stroke:0.25px #ffffff;">Port : 5500</div>
<svg style="left:1695px;top:1053px;" width="25" height="18" viewBox="0 0 25 18"><path d="M1.1 8.9 L6.1 15.1 M7.5 8.9 L11.9 15.1 L23.3 2 M11.7 8.4 L17.2 2" fill="none" stroke="#ffffff" stroke-width="2" stroke-linecap="round"/></svg>
<div class="t" style="left:1726.40px;top:1050.17px;font-size:20px;line-height:25px;color:#ffffff;font-family:'Liberation Sans',sans-serif;letter-spacing:0.114px;-webkit-text-stroke:0.25px #ffffff;">Prettier</div>
<svg style="left:1820px;top:1051px;" width="20" height="22" viewBox="0 0 20 22"><path d="M10 1.5 Q3.5 1.5 3.5 9 V14.5 L1.5 17.5 H18.5 L16.5 14.5 V9 Q16.5 1.5 10 1.5 Z" fill="none" stroke="#ffffff" stroke-width="2" stroke-linejoin="round"/><path d="M7.5 19.5 Q10 22 12.5 19.5" fill="none" stroke="#ffffff" stroke-width="2"/></svg>
</div></body></html>
